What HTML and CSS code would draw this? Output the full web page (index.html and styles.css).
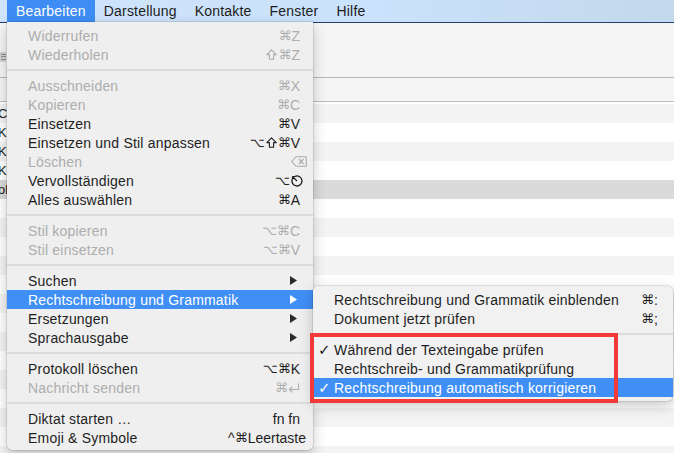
FILE: index.html
```html
<!DOCTYPE html>
<html lang="de">
<head>
<meta charset="utf-8">
<title>Bearbeiten</title>
<link rel="stylesheet" href="styles.css">
</head>
<body>
<div class="menubar">
  <span class="mb-item active">Bearbeiten</span>
  <span class="mb-item">Darstellung</span>
  <span class="mb-item">Kontakte</span>
  <span class="mb-item">Fenster</span>
  <span class="mb-item">Hilfe</span>
</div>

<div class="window">
  <div class="toolbar"><span class="tb-btn"><i></i><i></i><i></i></span></div>
  <div class="header"></div>
  <div class="rows">
    <div class="row alt"><span class="cell">Ca</span></div>
    <div class="row"><span class="cell">KV</span></div>
    <div class="row alt"><span class="cell">KV</span></div>
    <div class="row"><span class="cell">KV</span></div>
    <div class="row sel"><span class="cell">ola</span></div>
    <div class="row"></div>
    <div class="row alt"></div>
    <div class="row"></div>
    <div class="row alt"></div>
    <div class="row"></div>
    <div class="row alt"></div>
    <div class="row"></div>
    <div class="row alt"></div>
    <div class="row"></div>
    <div class="row alt"></div>
    <div class="row"></div>
    <div class="row alt"></div>
    <div class="row"></div>
    <div class="row alt"></div>
  </div>
</div>

<div class="menu main">
  <div class="item dis"><span class="label">Widerrufen</span><span class="sc"><span class="sym">⌘</span>Z</span></div>
  <div class="item dis"><span class="label">Wiederholen</span><span class="sc"><svg class="ico shift" width="11" height="11" viewBox="0 0 11 11"><path d="M5.5 0.8 L10.2 5.6 H7.6 V10.2 H3.4 V5.6 H0.8 Z" fill="none" stroke="currentColor" stroke-width="1.1" stroke-linejoin="round"/></svg><span class="sym">⌘</span>Z</span></div>
  <div class="sep"></div>
  <div class="item dis"><span class="label">Ausschneiden</span><span class="sc"><span class="sym">⌘</span>X</span></div>
  <div class="item dis"><span class="label">Kopieren</span><span class="sc"><span class="sym">⌘</span>C</span></div>
  <div class="item"><span class="label">Einsetzen</span><span class="sc"><span class="sym">⌘</span>V</span></div>
  <div class="item"><span class="label">Einsetzen und Stil anpassen</span><span class="sc"><span class="sym">⌥</span><svg class="ico shift" width="11" height="11" viewBox="0 0 11 11"><path d="M5.5 0.8 L10.2 5.6 H7.6 V10.2 H3.4 V5.6 H0.8 Z" fill="none" stroke="currentColor" stroke-width="1.1" stroke-linejoin="round"/></svg><span class="sym">⌘</span>V</span></div>
  <div class="item dis"><span class="label">Löschen</span><span class="sc ext-del"><svg class="ico" width="16" height="11" viewBox="0 0 16 11"><path d="M5 0.7 H15.3 V10.3 H5 L0.8 5.5 Z" fill="none" stroke="currentColor" stroke-width="1.1"/><path d="M8 3 L12.5 8 M12.5 3 L8 8" stroke="currentColor" stroke-width="1.2"/></svg></span></div>
  <div class="item"><span class="label">Vervollständigen</span><span class="sc ext-esc"><span class="sym">⌥</span><svg class="ico" width="12" height="12" viewBox="0 0 12 12"><path d="M4.2 1.3 A5 5 0 1 1 1.3 4.2" fill="none" stroke="currentColor" stroke-width="1.3"/><path d="M6 6 L1.5 1.5 M1.5 1.5 H4.6 M1.5 1.5 V4.6" fill="none" stroke="currentColor" stroke-width="1.2"/></svg></span></div>
  <div class="item"><span class="label">Alles auswählen</span><span class="sc"><span class="sym">⌘</span>A</span></div>
  <div class="sep"></div>
  <div class="item dis"><span class="label">Stil kopieren</span><span class="sc"><span class="sym">⌥⌘</span>C</span></div>
  <div class="item dis"><span class="label">Stil einsetzen</span><span class="sc"><span class="sym">⌥⌘</span>V</span></div>
  <div class="sep"></div>
  <div class="item"><span class="label">Suchen</span><svg class="arrow" width="7" height="9" viewBox="0 0 7 9"><polygon points="0,0 7,4.5 0,9" fill="currentColor"/></svg></div>
  <div class="item hl"><span class="label">Rechtschreibung und Grammatik</span><svg class="arrow" width="7" height="9" viewBox="0 0 7 9"><polygon points="0,0 7,4.5 0,9" fill="currentColor"/></svg></div>
  <div class="item"><span class="label">Ersetzungen</span><svg class="arrow" width="7" height="9" viewBox="0 0 7 9"><polygon points="0,0 7,4.5 0,9" fill="currentColor"/></svg></div>
  <div class="item"><span class="label">Sprachausgabe</span><svg class="arrow" width="7" height="9" viewBox="0 0 7 9"><polygon points="0,0 7,4.5 0,9" fill="currentColor"/></svg></div>
  <div class="sep"></div>
  <div class="item"><span class="label">Protokoll löschen</span><span class="sc"><span class="sym">⌥⌘</span>K</span></div>
  <div class="item dis"><span class="label">Nachricht senden</span><span class="sc"><span class="sym">⌘</span><svg class="ico" width="12" height="10" viewBox="0 0 12 10"><path d="M10.5 0.5 V6.5 H1.5" fill="none" stroke="currentColor" stroke-width="1.2"/><path d="M4.3 3.7 L1.5 6.5 L4.3 9.3" fill="none" stroke="currentColor" stroke-width="1.2"/></svg></span></div>
  <div class="sep"></div>
  <div class="item"><span class="label">Diktat starten …</span><span class="sc">fn fn</span></div>
  <div class="item"><span class="label">Emoji &amp; Symbole</span><span class="sc ext-space">^<span class="sym">⌘</span>Leertaste</span></div>
</div>

<div class="menu sub">
  <div class="item"><span class="check"></span><span class="label">Rechtschreibung und Grammatik einblenden</span><span class="sc"><span class="sym">⌘</span>:</span></div>
  <div class="item"><span class="check"></span><span class="label">Dokument jetzt prüfen</span><span class="sc"><span class="sym">⌘</span>;</span></div>
  <div class="sep"></div>
  <div class="item"><span class="check">✓</span><span class="label">Während der Texteingabe prüfen</span></div>
  <div class="item"><span class="check"></span><span class="label">Rechtschreib- und Grammatikprüfung</span></div>
  <div class="item hl"><span class="check">✓</span><span class="label">Rechtschreibung automatisch korrigieren</span></div>
</div>

<div class="annot"></div>
</body>
</html>
```

FILE: styles.css
```css
* { box-sizing: border-box; }
html, body { margin: 0; padding: 0; }
body {
  width: 674px;
  height: 453px;
  overflow: hidden;
  position: relative;
  font-family: "Liberation Sans", Arial, sans-serif;
  font-size: 14px;
  color: #1e1e1e;
  background: #f5f5f5;
}

/* menu bar */
.menubar {
  height: 23px;
  display: flex;
  padding-left: 7px;
  background: linear-gradient(to right, #cfe4fb 0%, #cae2fb 55%, #c2d8ec 100%);
  border-bottom: 1px solid #21406b;
  letter-spacing: 0.2px;
}
.mb-item {
  padding: 0 9px;
  line-height: 22px;
  color: #1c1c1c;
}
.mb-item.active { background: #3e8df4; color: #fff; }

/* background window */
.window { display: flex; flex-direction: column; }
.toolbar {
  height: 55px;
  border-bottom: 1px solid #b9b9b9;
  background: #f5f5f5;
  display: flex;
  align-items: flex-start;
  padding-top: 29px;
}
.tb-btn {
  width: 6px;
  height: 10px;
  background: #d4d4d4;
  display: flex;
  flex-direction: column;
  justify-content: space-around;
  padding: 1px 0 1px 1px;
}
.tb-btn i { display: block; height: 1px; background: #8f8f8f; }
.header {
  height: 24px;
  border-bottom: 1px solid #bdbdbd;
  background: #f5f5f5;
}
.rows { padding-top: 2px; background: #fff; }
.row {
  height: 19px;
  line-height: 19px;
  font-size: 13px;
  background: #fff;
  color: #222;
  white-space: nowrap;
}
.row.alt { background: #f4f4f4; }
.row.sel { background: #dadada; }
.cell { display: inline-block; margin-left: -2px; }

/* menus */
.menu {
  position: absolute;
  background: #efefef;
  letter-spacing: 0.2px;
  box-shadow: 0 0 0 0.5px rgba(0, 0, 0, 0.2), 0 5px 14px rgba(0, 0, 0, 0.22);
}
.menu.main {
  left: 7px;
  top: 22px;
  width: 306px;
  padding: 4px 0 3px;
  border-radius: 0 0 5px 5px;
}
.menu.sub {
  left: 313px;
  top: 286px;
  width: 360px;
  padding: 4px 0;
  border-radius: 5px;
  background: #f1f1f1;
}
.item {
  display: flex;
  align-items: center;
  height: 19px;
  padding: 0 13px 0 21px;
  white-space: nowrap;
  color: #1e1e1e;
}
.sub .item { padding: 0 15px 0 5px; }
.item .label { flex: 1; }
.item.dis { color: #adadad; }
.item.hl { background: #3f8ff6; color: #fff; }
.sep { height: 12px; display: flex; align-items: center; }
.sep::before { content: ""; flex: 1; height: 2px; background: #dcdcdc; }

.sc {
  display: flex;
  align-items: center;
  letter-spacing: 0;
  font-family: "Liberation Sans", "DejaVu Sans", sans-serif;
}
.sym { font-family: "DejaVu Sans", sans-serif; font-size: 13px; }
.ico { display: block; }
.shift { margin: 0 1px; }
.ext-del { margin-right: -7px; }
.ext-esc { margin-right: -3px; }
.ext-esc .ico { margin-left: 1px; }
.ext-space { margin-right: -6px; }
.arrow { margin-right: 3px; color: #2a2a2a; }
.hl .arrow { color: #fff; }
.check {
  width: 16px;
  font-family: "DejaVu Sans", sans-serif;
  font-size: 15px;
  letter-spacing: 0;
}

/* annotation overlay */
.annot {
  position: absolute;
  left: 310px;
  top: 333px;
  width: 308px;
  height: 70px;
  border: 4px solid #f33a3a;
}
```
